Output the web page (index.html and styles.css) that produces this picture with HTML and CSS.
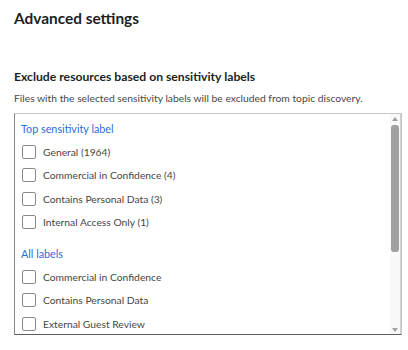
FILE: index.html
```html
<!DOCTYPE html>
<html>
<head>
<meta charset="UTF-8">
<title>Advanced settings</title>
<link rel="stylesheet" href="styles.css">
</head>
<body>
	<h1 class="title">Advanced settings</h1>

	<div class="section">
		<h2 class="section-title">Exclude resources based on sensitivity labels</h2>
		<p class="section-desc">Files with the selected sensitivity labels will be excluded from topic discovery.</p>

		<div class="listbox">
			<div class="list">
				<div class="group-title">Top sensitivity label</div>
				<label class="row"><span class="check"></span>General (1964)</label>
				<label class="row"><span class="check"></span>Commercial in Confidence (4)</label>
				<label class="row"><span class="check"></span>Contains Personal Data (3)</label>
				<label class="row"><span class="check"></span>Internal Access Only (1)</label>

				<div class="group-title group-gap">All labels</div>
				<label class="row"><span class="check"></span>Commercial in Confidence</label>
				<label class="row"><span class="check"></span>Contains Personal Data</label>
				<label class="row"><span class="check"></span>External Guest Review</label>
			</div>
			<!-- scrollbar -->
			<div class="scrollbar">
				<div class="arrow up"></div>
				<div class="track"><div class="thumb"></div></div>
				<div class="arrow down"></div>
			</div>
		</div>
	</div>
</body>
</html>
```

FILE: styles.css
```css
body{
	margin: 0;
	padding: 0 6px 0 14px;
	font-family: Lato, "Noto Sans", sans-serif;
	color: #323130;
	background: #fff;
}
.title{
	font-size: 15.4px;
	font-weight: 700;
	margin: 7px 0 0 0;
	line-height: 22px;
	color: #201f1e;
}

.section{
	margin-top: 40px;
}
.section-title{
	font-size: 12.2px;
	font-weight: 700;
	margin: 0;
	line-height: 16px;
	color: #201f1e;
}
.section-desc{
	font-size: 10.3px;
	margin: 5px 0 0 0;
	line-height: 16px;
	color: #484644;
}

/* 列表框 */
.listbox{
	margin-top: 7px;
	height: 220px;
	border: 1px solid #8a8886;
	border-top-color: #c8c6c4;
	border-right-color: #c8c6c4;
	border-bottom-color: #605e5c;
	display: flex;
	overflow: hidden;
}
.list{
	flex: 1;
	padding: 7px 0 0 6px;
	overflow: hidden;
}
.group-title{
	font-size: 10.8px;
	line-height: 16px;
	color: #2b6fd6;
	margin-bottom: 3px;
}
.group-gap{
	margin-top: 12px;
}
.row{
	display: flex;
	align-items: center;
	gap: 7px;
	height: 23.5px;
	font-size: 10.3px;
	color: #484644;
}
.check{
	width: 12px;
	height: 12px;
	border: 1px solid #8a8886;
	border-radius: 2px;
	margin-left: 1px;
	flex-shrink: 0;
}

.scrollbar{
	width: 10px;
	display: flex;
	flex-direction: column;
	background: #f8f8f8;
	border-right: 1px solid #d0d0d0;
}
.arrow{
	height: 9px;
	display: flex;
	justify-content: center;
	align-items: center;
}
.arrow::after{
	content: "";
	border-left: 3px solid transparent;
	border-right: 3px solid transparent;
}
.up::after{
	border-bottom: 4px solid #a0a0a0;
}
.down::after{
	border-top: 4px solid #a0a0a0;
}
.track{
	flex: 1;
	padding: 2px 1px;
}
.thumb{
	height: 127px;
	background: #a0a0a0;
	border-radius: 3px;
}
```
